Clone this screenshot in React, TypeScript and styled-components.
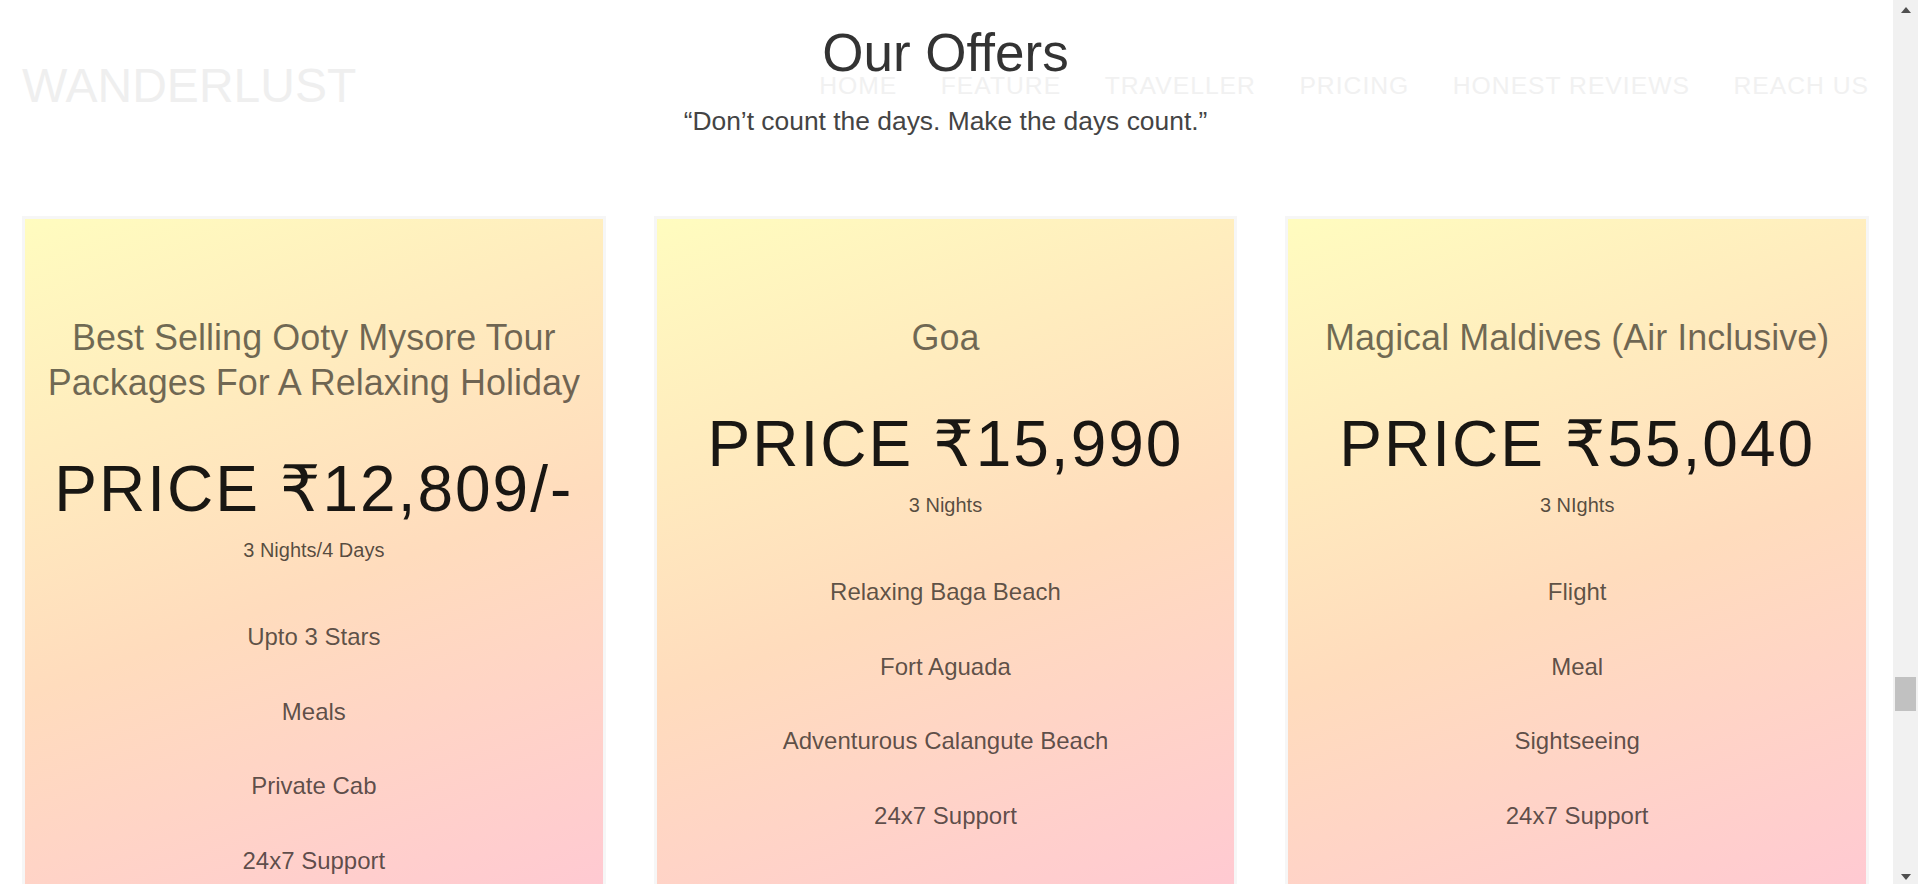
import styled, { createGlobalStyle } from "styled-components";

const GlobalStyle = createGlobalStyle`
  * {
    box-sizing: border-box;
  }

  html,
  body {
    margin: 0;
    padding: 0;
    height: 100%;
    overflow: hidden;
    background: #fff;
  }

  body {
    font-family: "Liberation Sans", Arial, "DejaVu Sans", sans-serif;
  }
`;

type Offer = {
  title: string;
  price: string;
  duration: string;
  perks: string[];
};

const links = ["Home", "Feature", "Traveller", "Pricing", "Honest Reviews", "Reach Us"];

const offers: Offer[] = [
  {
    title: "Best Selling Ooty Mysore Tour Packages For A Relaxing Holiday",
    price: "PRICE ₹12,809/-",
    duration: "3 Nights/4 Days",
    perks: ["Upto 3 Stars", "Meals", "Private Cab", "24x7 Support"],
  },
  {
    title: "Goa",
    price: "PRICE ₹15,990",
    duration: "3 Nights",
    perks: ["Relaxing Baga Beach", "Fort Aguada", "Adventurous Calangute Beach", "24x7 Support"],
  },
  {
    title: "Magical Maldives (Air Inclusive)",
    price: "PRICE ₹55,040",
    duration: "3 NIghts",
    perks: ["Flight", "Meal", "Sightseeing", "24x7 Support"],
  },
];

// scroll position of the page in the shot
const scrollRatio = 0.811;
const railHeight = 844;
const thumbHeight = 34;

const App = () => {
  const thumbTop = Math.round(scrollRatio * (railHeight - thumbHeight));

  return (
    <Window>
      <GlobalStyle />
      <Viewport>
        <Navbar>
          <Brand>WANDERLUST</Brand>
          <NavLinks>
            {links.map((link) => (
              <li key={link}>
                <a href="#">{link}</a>
              </li>
            ))}
          </NavLinks>
        </Navbar>

        <OffersSection>
          <Heading>Our Offers</Heading>
          <Quote>“Don’t count the days. Make the days count.”</Quote>

          <CardGrid>
            {offers.map((offer) => (
              <OfferCard key={offer.price}>
                <CardTitle>{offer.title}</CardTitle>
                <Price>{offer.price}</Price>
                <Duration>{offer.duration}</Duration>
                <PerkList>
                  {offer.perks.map((perk) => (
                    <li key={perk}>{perk}</li>
                  ))}
                </PerkList>
              </OfferCard>
            ))}
          </CardGrid>
        </OffersSection>
      </Viewport>

      <Scrollbar>
        <ArrowButton $up>
          <Arrow $up />
        </ArrowButton>
        <Rail>
          <Thumb style={{ marginTop: thumbTop }} />
        </Rail>
        <ArrowButton>
          <Arrow />
        </ArrowButton>
      </Scrollbar>
    </Window>
  );
};

const Window = styled.div`
  display: flex;
  height: 100vh;
  width: 100vw;
`;

const Viewport = styled.main`
  flex: 1;
  position: relative;
  overflow: hidden;
`;

const Navbar = styled.nav`
  position: absolute;
  top: 0;
  left: 0;
  right: 0;
  height: 172px;
  padding: 0 24px 0 22px;
  display: flex;
  align-items: center;
  justify-content: space-between;
  z-index: 2;
  pointer-events: none;
`;

const Brand = styled.h1`
  margin: 0;
  font-size: 48px;
  font-weight: 400;
  line-height: 56px;
  color: #efefef;
`;

const NavLinks = styled.ul`
  display: flex;
  align-items: center;
  gap: 43.5px;
  margin: 0;
  padding: 0;
  list-style: none;

  a {
    font-size: 24.7px;
    line-height: 28px;
    letter-spacing: 1px;
    text-transform: uppercase;
    text-decoration: none;
    color: #f1f1f1;
  }
`;

const OffersSection = styled.section`
  display: flex;
  flex-direction: column;
  align-items: center;
  padding: 23px 24px 0 22px;
`;

const Heading = styled.h2`
  margin: 0;
  font-size: 53px;
  line-height: 60px;
  font-weight: 400;
  color: #333;
`;

const Quote = styled.p`
  margin: 24px 0 0;
  font-size: 26.4px;
  line-height: 28px;
  color: #444;
`;

const CardGrid = styled.div`
  width: 100%;
  margin-top: 81px;
  display: grid;
  grid-template-columns: repeat(3, 1fr);
  gap: 48px;
`;

const OfferCard = styled.article`
  padding: 96px 20px 90px;
  border: 3px solid #f6f6f6;
  background: linear-gradient(160deg, #fffcbf 0%, #ffdcbd 50%, #ffc6d6 100%);
  text-align: center;
`;

const CardTitle = styled.h3`
  margin: 0;
  font-size: 36px;
  line-height: 45px;
  font-weight: 400;
  color: rgba(0, 0, 0, 0.56);
`;

const Price = styled.div`
  margin-top: 47px;
  font-size: 64px;
  line-height: 74px;
  letter-spacing: 2px;
  color: rgba(0, 0, 0, 0.9);
`;

const Duration = styled.div`
  margin-top: 12px;
  font-size: 20px;
  line-height: 24px;
  color: rgba(0, 0, 0, 0.68);
`;

const PerkList = styled.ul`
  display: flex;
  flex-direction: column;
  gap: 50.5px;
  margin: 63px 0 0;
  padding: 0;
  list-style: none;
  font-size: 24px;
  line-height: 24px;
  color: rgba(0, 0, 0, 0.65);
`;

const Scrollbar = styled.div`
  width: 25px;
  flex-shrink: 0;
  display: flex;
  flex-direction: column;
  background: #f1f1f1;
`;

const ArrowButton = styled.div<{ $up?: boolean }>`
  height: 20px;
  display: flex;
  justify-content: center;
  align-items: ${(p) => (p.$up ? "flex-start" : "flex-end")};
  padding: ${(p) => (p.$up ? "7px 0 0" : "0 0 4px")};
`;

const Arrow = styled.span<{ $up?: boolean }>`
  width: 0;
  height: 0;
  border-left: 5.5px solid transparent;
  border-right: 5.5px solid transparent;
  ${(p) => (p.$up ? "border-bottom: 6px solid #505050;" : "border-top: 6px solid #505050;")}
`;

const Rail = styled.div`
  flex: 1;
  display: flex;
  flex-direction: column;
`;

const Thumb = styled.div`
  width: 21px;
  height: ${thumbHeight}px;
  margin-left: 2px;
  background: #c1c1c1;
`;

export default App;
